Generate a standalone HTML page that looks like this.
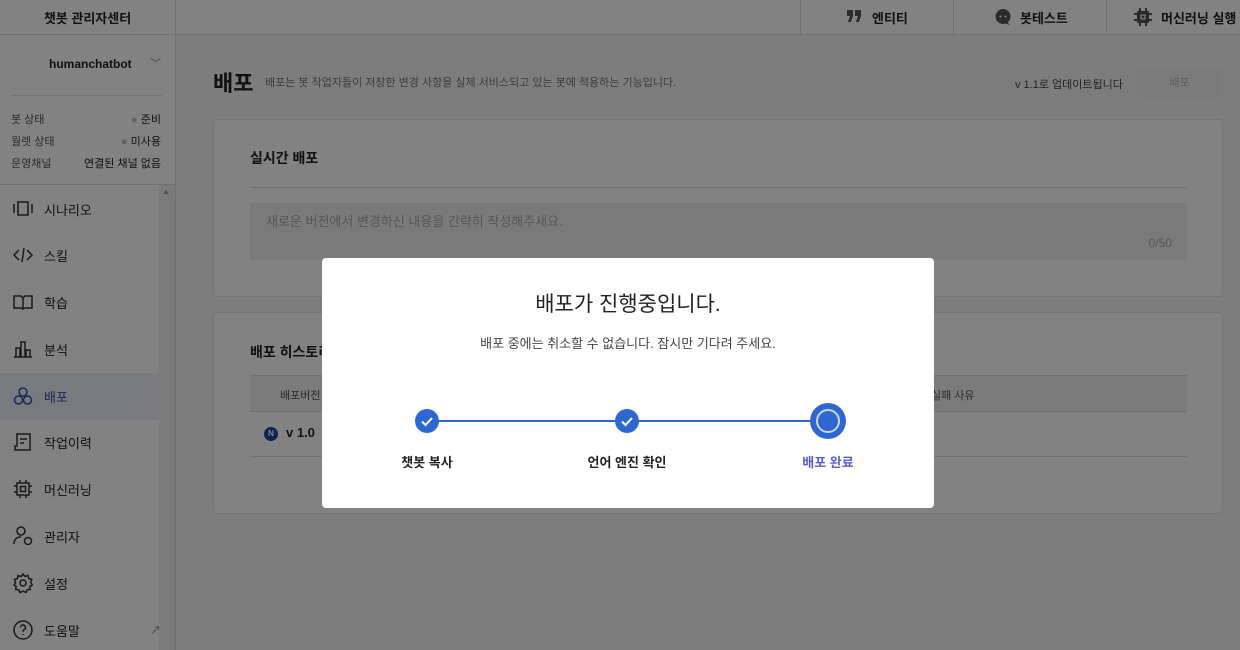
<!DOCTYPE html>
<html><head><meta charset="utf-8"><style>
*{margin:0;padding:0;box-sizing:border-box}
body{width:1240px;height:650px;overflow:hidden;background:#f5f6f8;font-family:"Liberation Sans","Noto Sans CJK KR",sans-serif;color:#222;position:relative}
.abs{position:absolute}
.hdr{left:0;top:0;width:1240px;height:35px;background:#fff;border-bottom:1px solid #ddd}
.side{left:0;top:35px;width:176px;height:615px;background:#fff;border-right:1px solid #ddd}
.t{position:absolute;white-space:nowrap}
.menu{position:absolute;left:12px;font-size:13px;display:flex;align-items:center;gap:10px}
.menu svg{width:22px;height:22px}
.card{position:absolute;left:213px;width:1010px;background:#fff;border:1px solid #e3e3e3;border-radius:4px}
.ov{left:0;top:0;width:1240px;height:650px;background:rgba(0,0,0,.49)}
.modal{left:322px;top:258px;width:612px;height:250px;background:#fff;border-radius:4px}
</style></head><body>
<div class="abs hdr">
 <div class="t" style="left:0;width:175px;text-align:center;top:8px;font-size:13px;font-weight:bold">챗봇 관리자센터</div>
 <div class="abs" style="left:175px;top:0;width:1px;height:35px;background:#ddd"></div>
 <div class="abs" style="left:800px;top:0;width:1px;height:35px;background:#ddd"></div>
 <div class="abs" style="left:953px;top:0;width:1px;height:35px;background:#ddd"></div>
 <div class="abs" style="left:1106px;top:0;width:1px;height:35px;background:#ddd"></div>
 <svg class="abs" style="left:847px;top:10px" width="14" height="12" viewBox="0 0 14 12"><path d="M0 0h6v6l-2 6H1l2-6H0zM8 0h6v6l-2 6H9l2-6H8z" fill="#555"/></svg>
 <div class="t" style="left:872px;top:8px;font-size:13px;font-weight:bold">엔티티</div>
 <svg class="abs" style="left:994px;top:8px" width="18" height="18" viewBox="0 0 18 18"><circle cx="9" cy="8.5" r="7.5" fill="#555"/><path d="M13 14l3 3-5-1.5z" fill="#555"/><circle cx="6.5" cy="8.5" r="1" fill="#fff"/><circle cx="11.5" cy="8.5" r="1" fill="#fff"/></svg>
 <div class="t" style="left:1020px;top:8px;font-size:13px;font-weight:bold">봇테스트</div>
 <svg class="abs" style="left:1134px;top:8px" width="18" height="18" viewBox="0 0 18 18" fill="#555"><rect x="3" y="3" width="12" height="12" rx="1"/><rect x="6.5" y="6.5" width="5" height="5" fill="#fff"/><rect x="7.7" y="7.7" width="2.6" height="2.6"/><path d="M5 0h2v3H5zM11 0h2v3h-2zM5 15h2v3H5zM11 15h2v3h-2zM0 5h3v2H0zM0 11h3v2H0zM15 5h3v2h-3zM15 11h3v2h-3z"/></svg>
 <div class="t" style="left:1161px;top:8px;font-size:13px;font-weight:bold">머신러닝 실행</div>
</div>
<div class="abs side">
 <div class="t" style="left:49px;top:22px;font-size:12px;font-weight:bold">humanchatbot</div>
 <div class="t" style="left:150px;top:20px;font-size:11px;color:#888">﹀</div>
 <div class="abs" style="left:10px;top:60px;width:152px;height:1px;background:#e3e3e3"></div>
 <div class="t" style="left:11px;top:76px;font-size:11px;color:#555">봇 상태</div>
 <div class="t" style="right:14px;top:76px;font-size:11px"><span style="color:#bbb">●</span> 준비</div>
 <div class="t" style="left:11px;top:98px;font-size:11px;color:#555">월렛 상태</div>
 <div class="t" style="right:14px;top:98px;font-size:11px"><span style="color:#bbb">●</span> 미사용</div>
 <div class="t" style="left:11px;top:120px;font-size:11px;color:#555">운영채널</div>
 <div class="t" style="right:14px;top:120px;font-size:11px">연결된 채널 없음</div>
 <div class="abs" style="left:0;top:149px;width:175px;height:1px;background:#ddd"></div>
 <div class="abs" style="left:159px;top:150px;width:16px;height:465px;background:#f2f2f2"></div>
 <div class="t" style="left:162px;top:152px;font-size:8px;color:#999">▲</div>
 <div class="abs" style="left:0;top:338px;width:159px;height:47px;background:#eef0f7"></div>
</div>
<div class="menu" style="top:198px"><svg viewBox="0 0 22 22" fill="none" stroke="#333" stroke-width="1.5"><path d="M2 6v9M20 6v9M6 4h10v13H6z"/></svg>시나리오</div>
<div class="menu" style="top:244px"><svg viewBox="0 0 22 22" fill="none" stroke="#333" stroke-width="1.5"><path d="M7 6l-5 5 5 5M15 6l5 5-5 5M12 4l-2 14"/></svg>스킬</div>
<div class="menu" style="top:291px"><svg viewBox="0 0 22 22" fill="none" stroke="#333" stroke-width="1.5"><path d="M2 5h7l2 2 2-2h7v12h-7l-2 1-2-1H2zM11 7v11"/></svg>학습</div>
<div class="menu" style="top:338px"><svg viewBox="0 0 22 22" fill="none" stroke="#333" stroke-width="1.5"><path d="M2 19h18M4 19V10h4v9M9 19V4h4v15M14 19v-7h4v7"/></svg>분석</div>
<div class="menu" style="top:385px;color:#2a55b0"><svg viewBox="0 0 22 22" fill="none" stroke="#2a55b0" stroke-width="1.5"><circle cx="11" cy="7" r="4"/><circle cx="6.5" cy="15" r="4"/><circle cx="15.5" cy="15" r="4"/></svg>배포</div>
<div class="menu" style="top:431px"><svg viewBox="0 0 22 22" fill="none" stroke="#333" stroke-width="1.5"><path d="M5 3h13v16H3v-4h2zM8 8h7M8 12h4"/></svg>작업이력</div>
<div class="menu" style="top:478px"><svg viewBox="0 0 22 22" fill="none" stroke="#333" stroke-width="1.5"><rect x="5" y="5" width="12" height="12"/><rect x="8.5" y="8.5" width="5" height="5"/><path d="M8 2v3M14 2v3M8 17v3M14 17v3M2 8h3M2 14h3M17 8h3M17 14h3"/></svg>머신러닝</div>
<div class="menu" style="top:525px"><svg viewBox="0 0 22 22" fill="none" stroke="#333" stroke-width="1.5"><circle cx="9" cy="6" r="4"/><path d="M2 19c0-5 3-7 7-7"/><circle cx="16" cy="16" r="3.5"/></svg>관리자</div>
<div class="menu" style="top:572px"><svg viewBox="0 0 22 22" fill="none" stroke="#333" stroke-width="1.5"><circle cx="11" cy="11" r="3"/><path d="M11 2l2 2.5 3-1 .8 3 3 1-1 3 1.5 2.5-2.5 1.5.5 3-3 .2-1.3 2.8-3-1.3-3 1.3-1.3-2.8-3-.2.5-3L2 13l1.5-2.5-1-3 3-1L6 3.5l3 1z"/></svg>설정</div>
<div class="menu" style="top:619px"><svg viewBox="0 0 22 22" fill="none" stroke="#333" stroke-width="1.5"><circle cx="11" cy="11" r="9"/><path d="M8.5 8.5a2.5 2.5 0 1 1 3.5 2.3c-.8.4-1 1-1 2M11 15v1"/></svg>도움말</div>
<div class="t" style="left:150px;top:622px;font-size:11px;color:#888">↗</div>

<div class="t" style="left:213px;top:66px;font-size:22px;font-weight:bold">배포</div>
<div class="t" style="left:265px;top:74px;font-size:11px;color:#777">배포는 봇 작업자들이 저장한 변경 사항을 실제 서비스되고 있는 봇에 적용하는 기능입니다.</div>
<div class="t" style="left:1015px;top:76px;font-size:11px;color:#444">v 1.1로 업데이트됩니다</div>
<div class="abs" style="left:1137px;top:68px;width:85px;height:30px;background:#f2f2f2;border-radius:3px;font-size:11px;color:#bbb;text-align:center;line-height:30px">배포</div>

<div class="card" style="top:119px;height:178px">
 <div class="t" style="left:36px;top:28px;font-size:14px;font-weight:bold">실시간 배포</div>
 <div class="abs" style="left:36px;top:67px;width:937px;height:1px;background:#ddd"></div>
 <div class="abs" style="left:36px;top:83px;width:937px;height:57px;background:#f0f0f0"></div>
 <div class="t" style="left:52px;top:91px;font-size:13px;color:#aaa">새로운 버전에서 변경하신 내용을 간략히 작성해주세요.</div>
 <div class="t" style="right:50px;top:116px;font-size:12px;color:#aaa">0/50</div>
</div>
<div class="card" style="top:312px;height:202px">
 <div class="t" style="left:36px;top:29px;font-size:14px;font-weight:bold">배포 히스토리</div>
 <div class="abs" style="left:36px;top:62px;width:937px;height:37px;background:#f2f2f2;border-top:1px solid #ddd;border-bottom:1px solid #ddd"></div>
 <div class="t" style="left:66px;top:74px;font-size:11px;color:#555">배포버전</div>
 <div class="t" style="left:717px;top:74px;font-size:11px;color:#555">실패 사유</div>
 <div class="abs" style="left:50px;top:114px;width:14px;height:14px;border-radius:50%;background:#1d47a8;color:#fff;font-size:8px;text-align:center;line-height:14px;font-weight:bold">N</div>
 <div class="t" style="left:72px;top:112px;font-size:13px;font-weight:bold">v 1.0</div>
 <div class="abs" style="left:36px;top:143px;width:937px;height:1px;background:#ddd"></div>
</div>

<div class="abs ov"></div>
<div class="abs modal">
 <div class="t" style="left:0;width:612px;text-align:center;top:30px;font-size:21px">배포가 진행중입니다.</div>
 <div class="t" style="left:0;width:612px;text-align:center;top:75px;font-size:13px;color:#444">배포 중에는 취소할 수 없습니다. 잠시만 기다려 주세요.</div>
 <div class="abs" style="left:105px;top:162px;width:400px;height:2px;background:#2f67d0"></div>
 <svg class="abs" style="left:93px;top:151px" width="24" height="24"><circle cx="12" cy="12" r="12" fill="#2f67d0"/><path d="M7 12.5l3.5 3.5 6.5-7" stroke="#fff" stroke-width="2" fill="none"/></svg>
 <svg class="abs" style="left:293px;top:151px" width="24" height="24"><circle cx="12" cy="12" r="12" fill="#2f67d0"/><path d="M7 12.5l3.5 3.5 6.5-7" stroke="#fff" stroke-width="2" fill="none"/></svg>
 <svg class="abs" style="left:488px;top:145px" width="36" height="36"><circle cx="18" cy="18" r="18" fill="#2f67d0"/><circle cx="18" cy="18" r="11" stroke="#c9d8f5" stroke-width="2" fill="none"/></svg>
 <div class="t" style="left:65px;width:80px;text-align:center;top:194px;font-size:13px;font-weight:bold">챗봇 복사</div>
 <div class="t" style="left:245px;width:120px;text-align:center;top:194px;font-size:13px;font-weight:bold">언어 엔진 확인</div>
 <div class="t" style="left:466px;width:80px;text-align:center;top:194px;font-size:13px;font-weight:bold;color:#5b5bd6">배포 완료</div>
</div>
</body></html>
